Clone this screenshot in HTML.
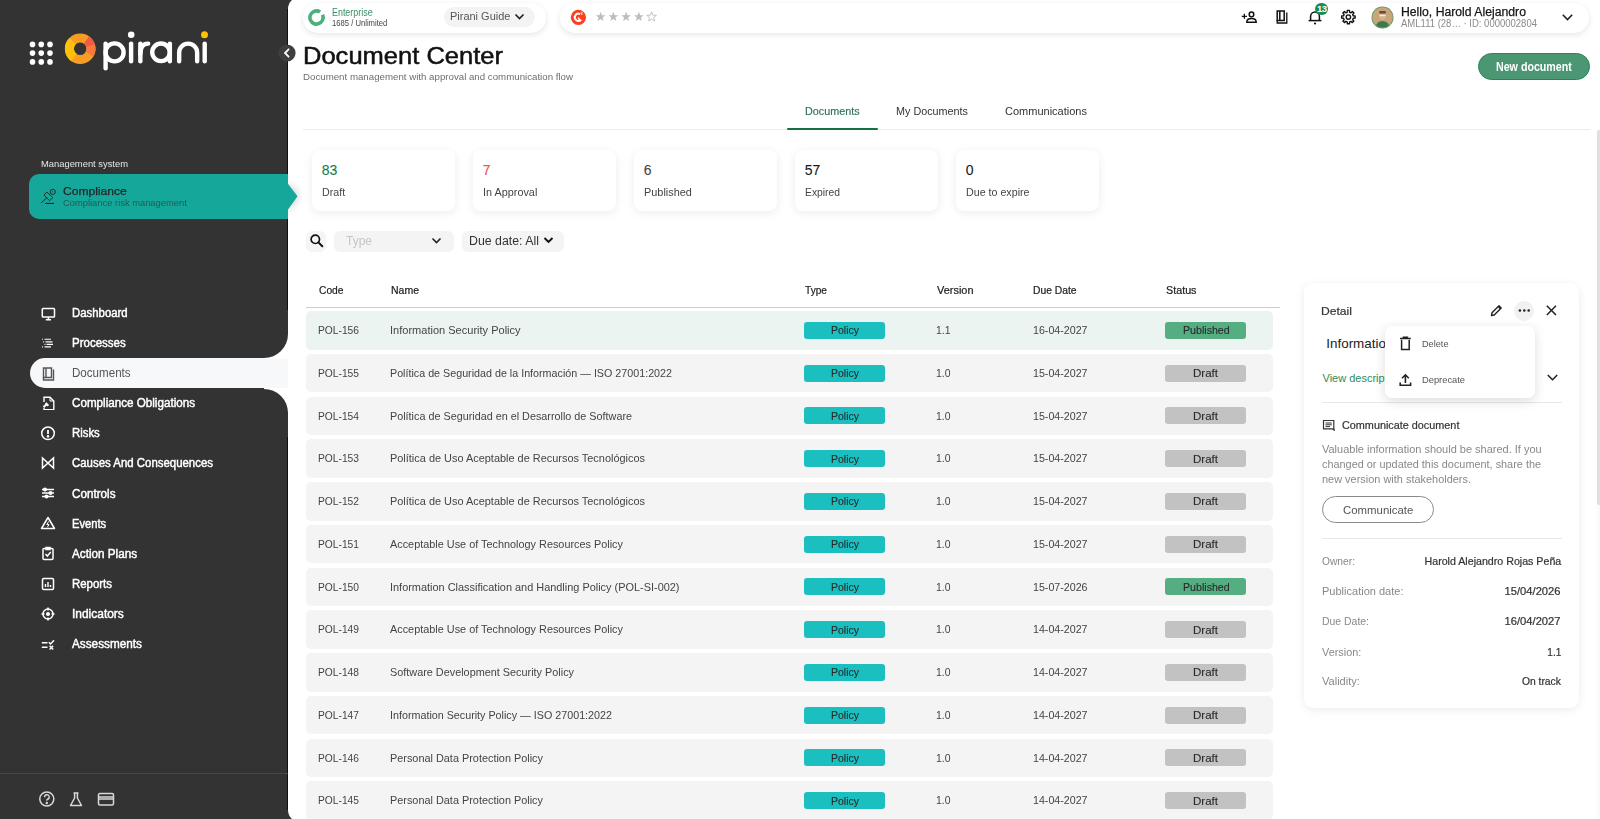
<!DOCTYPE html>
<html><head><meta charset="utf-8">
<style>
*{box-sizing:border-box;margin:0;padding:0}
html,body{width:1600px;height:819px;overflow:hidden}
body{background:#333333;font-family:"Liberation Sans",sans-serif;position:relative;color:#333}
.a{position:absolute;white-space:nowrap;line-height:1}
</style></head><body>
<div style="position:absolute;left:0;top:0;width:288px;height:819px;background:#333333"></div>
<svg class="a" style="left:0;top:0" width="288" height="100" viewBox="0 0 288 100"><circle cx="32.5" cy="44.4" r="2.8" fill="#fff"/><circle cx="32.5" cy="53.1" r="2.8" fill="#fff"/><circle cx="32.5" cy="61.9" r="2.8" fill="#fff"/><circle cx="41.25" cy="44.4" r="2.8" fill="#fff"/><circle cx="41.25" cy="53.1" r="2.8" fill="#fff"/><circle cx="41.25" cy="61.9" r="2.8" fill="#fff"/><circle cx="50" cy="44.4" r="2.8" fill="#fff"/><circle cx="50" cy="53.1" r="2.8" fill="#fff"/><circle cx="50" cy="61.9" r="2.8" fill="#fff"/><circle cx="80.2" cy="48.7" r="10.8" stroke="#f89c24" stroke-width="9" fill="none"/><path d="M72.56 41.06 A10.80 10.80 0 0 0 74.01 57.55" stroke="#ffc107" stroke-width="9.00" fill="none"/><path d="M90.63 45.90 A10.80 10.80 0 0 0 86.39 39.85" stroke="#f25a48" stroke-width="9.00" fill="none"/><path d="M89.55 54.10 A10.80 10.80 0 0 0 90.63 45.90" stroke="#f57a3e" stroke-width="9.00" fill="none"/><g stroke="#fff" stroke-width="4.4" fill="none" stroke-linecap="round"><line x1="105.6" y1="43.6" x2="105.6" y2="68.3"/><circle cx="114.6" cy="52.4" r="9.0"/><line x1="131.1" y1="43.6" x2="131.1" y2="61.2"/><line x1="140.35" y1="43.6" x2="140.35" y2="61.2"/><path d="M140.35 54 Q140.35 43.6 148.2 43.6"/><circle cx="161" cy="52.3" r="8.8"/><line x1="169.85" y1="43.6" x2="169.85" y2="61.2"/><path d="M179.15 61.2 V52.6 A9 9 0 0 1 197.15 52.6 V61.2"/><line x1="204.7" y1="43.6" x2="204.7" y2="61.2"/></g><circle cx="131.2" cy="34.7" r="3.3" fill="#fff"/><circle cx="204.5" cy="34.7" r="3.5" fill="#ffc107"/></svg>
<div class="a" style="left:287px;top:9px;width:1.2px;height:801px;background:#0f0f0f"></div>
<div id="t1" class="a" style="left:40.70px;top:160.21px;font-size:9.20px;color:#e6e6e6;font-weight:normal;transform:scaleX(1.0202);transform-origin:left center;">Management system</div>
<div class="a" style="left:29px;top:174px;width:260px;height:45px;background:#15a89a;border-radius:10px 0 0 10px"></div>
<svg class="a" style="left:40px;top:187px" width="18" height="18" viewBox="0 0 18 18"><g stroke="#262626" stroke-width="0.95" fill="none" stroke-linejoin="round"><path d="M3.9 8 L7 5.1 L12.8 10.6 L9.6 13.7 Z"/><path d="M6.6 10.9 L1.3 15.7" stroke-linecap="round"/><path d="M5.2 16.4 H14" stroke-width="1.1"/><circle cx="12.8" cy="4.9" r="2.6"/><path d="M12.7 3.9 V5.8" stroke-width="0.6"/></g></svg>
<div id="t2" class="a" style="left:63.40px;top:185.89px;font-size:11.00px;color:#262626;font-weight:normal;transform:scaleX(1.0982);transform-origin:left center;-webkit-text-stroke:0.25px #262626;">Compliance</div>
<div id="t3" class="a" style="left:63.40px;top:198.58px;font-size:9.00px;color:#1f5c55;font-weight:normal;transform:scaleX(1.0398);transform-origin:left center;">Compliance risk management</div>
<div class="a" style="left:29.5px;top:358.2px;width:270px;height:30.3px;background:#f7f8fa;border-radius:15px 0 0 15px"></div>
<div class="a" style="left:264px;top:334px;width:24px;height:24.5px;background:#ffffff"></div>
<div class="a" style="left:240px;top:310px;width:48px;height:48.2px;background:#333;border-radius:0 0 24px 0"></div>
<div class="a" style="left:264px;top:388.3px;width:24px;height:24px;background:#ffffff"></div>
<div class="a" style="left:240px;top:388.7px;width:48px;height:48px;background:#333;border-radius:0 24px 0 0"></div>
<svg class="a" style="left:40px;top:304.5px" width="16" height="16" viewBox="0 0 16 16"><g stroke="#ffffff" stroke-width="1.5" fill="none"><rect x="2.3" y="3.4" width="12.2" height="8.6" rx="0.8" /><path d="M8.4 12 V14.2 M5.8 14.8 H11"/></g></svg>
<div id="t4" class="a" style="left:72.40px;top:306.94px;font-size:12.00px;color:#ffffff;font-weight:normal;transform:scaleX(0.9486);transform-origin:left center;-webkit-text-stroke:0.45px #fff;">Dashboard</div>
<svg class="a" style="left:40px;top:334.3px" width="16" height="16" viewBox="0 0 16 16"><g stroke="#ffffff" stroke-width="1.5" fill="none"><path d="M2 5.2 H2.9 M4.5 5.2 H11 M3 7.9 H3.9 M5.5 7.9 H12.5 M4.5 10.4 H5.4 M6.5 10.4 H13 M2 12.8 H2.9 M4.5 12.8 H11" stroke-width="1.15"/></g></svg>
<div id="t5" class="a" style="left:72.40px;top:336.74px;font-size:12.00px;color:#ffffff;font-weight:normal;transform:scaleX(0.9584);transform-origin:left center;-webkit-text-stroke:0.45px #fff;">Processes</div>
<svg class="a" style="left:40px;top:364.6px" width="16" height="16" viewBox="0 0 16 16"><g stroke="#555555" stroke-width="1.5" fill="none"><path d="M3.5 3 H11.5 V12.5 H3.5 Z M6 3 V12.5" stroke-width="1.4"/><path d="M13.5 4.5 V15 H3.5 V12.5" stroke-width="1.4"/></g></svg>
<div id="t6" class="a" style="left:72.40px;top:367.04px;font-size:12.00px;color:#555555;font-weight:normal;transform:scaleX(0.9654);transform-origin:left center;">Documents</div>
<svg class="a" style="left:40px;top:394.4px" width="16" height="16" viewBox="0 0 16 16"><g stroke="#ffffff" stroke-width="1.5" fill="none"><path d="M4 8 V3.2 H10 L13.8 7 V15.8 H4 V14" stroke-width="1.4"/><path d="M10 3.2 V7 H13.8" stroke-width="1"/><path d="M3.5 13.2 L6.5 10.2 M5.6 9 L8.4 11.8" stroke-width="2"/></g></svg>
<div id="t7" class="a" style="left:72.40px;top:396.84px;font-size:12.00px;color:#ffffff;font-weight:normal;transform:scaleX(0.9705);transform-origin:left center;-webkit-text-stroke:0.45px #fff;">Compliance Obligations</div>
<svg class="a" style="left:40px;top:424.7px" width="16" height="16" viewBox="0 0 16 16"><g stroke="#ffffff" stroke-width="1.5" fill="none"><circle cx="8" cy="8.3" r="6.3"/><path d="M8 5 V9" stroke-width="1.8"/><circle cx="8" cy="11.3" r="0.6" fill="#ffffff"/></g></svg>
<div id="t8" class="a" style="left:72.40px;top:427.14px;font-size:12.00px;color:#ffffff;font-weight:normal;transform:scaleX(0.9474);transform-origin:left center;-webkit-text-stroke:0.45px #fff;">Risks</div>
<svg class="a" style="left:40px;top:455.0px" width="16" height="16" viewBox="0 0 16 16"><g stroke="#ffffff" stroke-width="1.5" fill="none"><path d="M2.5 3 L13.5 13 V3 L2.5 13 Z"/></g></svg>
<div id="t9" class="a" style="left:72.40px;top:457.44px;font-size:12.00px;color:#ffffff;font-weight:normal;transform:scaleX(0.9520);transform-origin:left center;-webkit-text-stroke:0.45px #fff;">Causes And Consequences</div>
<svg class="a" style="left:40px;top:485.3px" width="16" height="16" viewBox="0 0 16 16"><g stroke="#ffffff" stroke-width="1.5" fill="none"><path d="M2 4.5 H14 M2 8 H14 M2 11.5 H14"/><circle cx="5" cy="4.5" r="1.3" fill="#ffffff"/><circle cx="10.5" cy="8" r="1.3" fill="#ffffff"/><circle cx="6.5" cy="11.5" r="1.3" fill="#ffffff"/></g></svg>
<div id="t10" class="a" style="left:72.40px;top:487.74px;font-size:12.00px;color:#ffffff;font-weight:normal;transform:scaleX(0.9734);transform-origin:left center;-webkit-text-stroke:0.45px #fff;">Controls</div>
<svg class="a" style="left:40px;top:515.1px" width="16" height="16" viewBox="0 0 16 16"><g stroke="#ffffff" stroke-width="1.5" fill="none"><path d="M8 2.5 L14.5 13.5 H1.5 Z" stroke-linejoin="round"/><path d="M8.6 6.5 L6.8 9.6 H9 L7.4 12.2" stroke-width="1"/></g></svg>
<div id="t11" class="a" style="left:72.40px;top:517.54px;font-size:12.00px;color:#ffffff;font-weight:normal;transform:scaleX(0.9322);transform-origin:left center;-webkit-text-stroke:0.45px #fff;">Events</div>
<svg class="a" style="left:40px;top:545.4px" width="16" height="16" viewBox="0 0 16 16"><g stroke="#ffffff" stroke-width="1.5" fill="none"><rect x="3" y="3.5" width="10" height="11" rx="1"/><path d="M6 2.5 H10 V4.5 H6 Z" fill="#ffffff"/><path d="M5.5 9 L7.3 11 L10.8 7"/></g></svg>
<div id="t12" class="a" style="left:72.40px;top:547.84px;font-size:12.00px;color:#ffffff;font-weight:normal;transform:scaleX(0.9745);transform-origin:left center;-webkit-text-stroke:0.45px #fff;">Action Plans</div>
<svg class="a" style="left:40px;top:575.7px" width="16" height="16" viewBox="0 0 16 16"><g stroke="#ffffff" stroke-width="1.5" fill="none"><rect x="2.5" y="2.5" width="11" height="11" rx="1.2"/><path d="M5.5 11 V8 M8 11 V6 M10.5 11 V9" stroke-width="1.4"/></g></svg>
<div id="t13" class="a" style="left:72.40px;top:578.14px;font-size:12.00px;color:#ffffff;font-weight:normal;transform:scaleX(0.9517);transform-origin:left center;-webkit-text-stroke:0.45px #fff;">Reports</div>
<svg class="a" style="left:40px;top:605.5px" width="16" height="16" viewBox="0 0 16 16"><g stroke="#ffffff" stroke-width="1.5" fill="none"><circle cx="8" cy="8" r="5"/><path d="M8 1.5 V4.5 M8 11.5 V14.5 M1.5 8 H4.5 M11.5 8 H14.5"/><circle cx="8" cy="8" r="1.3" fill="#ffffff"/></g></svg>
<div id="t14" class="a" style="left:72.40px;top:607.94px;font-size:12.00px;color:#ffffff;font-weight:normal;transform:scaleX(0.9956);transform-origin:left center;-webkit-text-stroke:0.45px #fff;">Indicators</div>
<svg class="a" style="left:40px;top:635.8px" width="16" height="16" viewBox="0 0 16 16"><g stroke="#ffffff" stroke-width="1.5" fill="none"><path d="M1.8 6.8 H7.5 M1.8 11.2 H7.5" stroke-width="1.4"/><path d="M8.8 6.2 L10.6 8 L14 4.2 M9.6 9.8 L13.2 13.4 M13.2 9.8 L9.6 13.4" stroke-width="1.4"/></g></svg>
<div id="t15" class="a" style="left:72.40px;top:638.24px;font-size:12.00px;color:#ffffff;font-weight:normal;transform:scaleX(0.9795);transform-origin:left center;-webkit-text-stroke:0.45px #fff;">Assessments</div>
<div class="a" style="left:0;top:772.5px;width:288px;height:1px;background:#474747"></div>
<svg class="a" style="left:38px;top:791px" width="80" height="17" viewBox="0 0 80 17"><g stroke="#d8d8d8" stroke-width="1.5" fill="none"><circle cx="8.8" cy="8" r="7"/><path d="M6.6 6.2 A2.3 2.3 0 1 1 9.2 8.3 Q8.8 8.6 8.8 9.8" stroke-width="1.4"/><circle cx="8.8" cy="12.1" r="0.5" fill="#d8d8d8"/><path d="M35.5 2 H40.5 M36.6 2 V7 L32.5 14.5 H43.5 L39.4 7 V2" stroke-linejoin="round"/><rect x="60.5" y="2.5" width="15" height="11.5" rx="1.5"/><path d="M60.5 6 H75.5 M60.5 8 H75.5" stroke-width="1.6"/></g></svg>
<div class="a" style="left:288px;top:-3px;width:1312px;height:825px;background:#ffffff;border-radius:12px 0 0 12px"></div>
<div class="a" style="left:288px;top:160px;width:40px;height:75px;overflow:hidden"><svg style="position:absolute;left:-1px;top:22px;filter:drop-shadow(0 0 4px rgba(0,0,0,0.28))" width="13" height="30" viewBox="0 0 13 30"><path d="M0 0.5 L10.5 14.3 L0 29 Z" fill="#15a89a"/></svg></div>
<svg class="a" style="left:277px;top:43px" width="20" height="20" viewBox="0 0 20 20"><circle cx="10" cy="10" r="8.6" fill="#3f3f3f"/><path d="M11.6 6.3 L8 10 L11.6 13.7" stroke="#fff" stroke-width="1.8" fill="none" stroke-linecap="round"/></svg>
<div class="a" style="left:303px;top:2.5px;width:243px;height:30px;background:#fff;border-radius:15px;box-shadow:0 2px 6px rgba(0,0,0,0.10)"></div>
<svg class="a" style="left:307px;top:8px" width="19" height="19" viewBox="0 0 19 19"><circle cx="9.5" cy="9.5" r="6.6" stroke="#4caf7d" stroke-width="3.6" fill="none" stroke-dasharray="37.5 4" transform="rotate(-25 9.5 9.5)"/></svg>
<div id="t16" class="a" style="left:331.60px;top:7.84px;font-size:10.00px;color:#3d8c6a;font-weight:normal;transform:scaleX(0.8908);transform-origin:left center;">Enterprise</div>
<div id="t17" class="a" style="left:331.60px;top:18.55px;font-size:8.80px;color:#444;font-weight:normal;transform:scaleX(0.8698);transform-origin:left center;">1685 / Unlimited</div>
<div class="a" style="left:443.8px;top:7.3px;width:91px;height:19.5px;background:#f3f3f3;border-radius:10px"></div>
<div id="t18" class="a" style="left:450.00px;top:10.91px;font-size:10.50px;color:#555;font-weight:normal;transform:scaleX(1.0453);transform-origin:left center;">Pirani Guide</div>
<svg class="a" style="left:514px;top:13px" width="11" height="8" viewBox="0 0 11 8"><path d="M1.5 1.5 L5.5 5.5 L9.5 1.5" stroke="#222" stroke-width="1.7" fill="none"/></svg>
<div class="a" style="left:560px;top:2.5px;width:1029px;height:30px;background:#fff;border-radius:15px;box-shadow:0 2px 6px rgba(0,0,0,0.10)"></div>
<svg class="a" style="left:570px;top:9px" width="17" height="17" viewBox="0 0 17 17"><circle cx="8.4" cy="8.3" r="7.6" fill="#ff3d1f"/><path d="M10.2 5.2 A3.6 3.6 0 1 0 11.2 10.6" stroke="#fff" stroke-width="1.9" fill="none"/><path d="M8.2 8.6 L9.8 11.2" stroke="#fff" stroke-width="1.6"/><path d="M10.8 3.4 Q12 2.6 12.4 3.6 Q12.4 4.3 10.9 5.2 H12.8" stroke="#fff" stroke-width="0.7" fill="none"/></svg>
<svg class="a" style="left:592px;top:8px" width="70" height="18" viewBox="0 0 70 18"><polygon points="8.60,3.85 7.35,7.18 3.80,7.34 6.58,9.56 5.63,12.99 8.60,11.02 11.57,12.99 10.62,9.56 13.40,7.34 9.85,7.18" fill="#bdbdbd"/><polygon points="21.35,3.85 20.10,7.18 16.55,7.34 19.33,9.56 18.38,12.99 21.35,11.02 24.32,12.99 23.37,9.56 26.15,7.34 22.60,7.18" fill="#bdbdbd"/><polygon points="34.10,3.85 32.85,7.18 29.30,7.34 32.08,9.56 31.13,12.99 34.10,11.02 37.07,12.99 36.12,9.56 38.90,7.34 35.35,7.18" fill="#bdbdbd"/><polygon points="46.85,3.85 45.60,7.18 42.05,7.34 44.83,9.56 43.88,12.99 46.85,11.02 49.82,12.99 48.87,9.56 51.65,7.34 48.10,7.18" fill="#bdbdbd"/><polygon points="59.60,3.85 58.35,7.18 54.80,7.34 57.58,9.56 56.63,12.99 59.60,11.02 62.57,12.99 61.62,9.56 64.40,7.34 60.85,7.18" fill="none" stroke="#bdbdbd" stroke-width="0.9"/></svg>
<svg class="a" style="left:1238px;top:6px" width="125" height="24" viewBox="0 0 125 24"><g stroke="#111" stroke-width="1.5" fill="none"><path d="M3.8 10.3 H8.9 M6.35 7.8 V12.8" stroke-width="1.3"/><circle cx="13.5" cy="8.4" r="2.3"/><path d="M8.8 16.2 Q8.8 12.6 13.5 12.6 Q18.2 12.6 18.2 16.2 Z"/><path d="M39.2 5 H46.2 V14.5 H39.2 Z"/><path d="M41.8 5 V14.5"/><path d="M39.2 14.5 V17 H48.8 V6.5" stroke-width="1.3"/><path d="M72.6 14.6 V10.3 A4.4 4.4 0 0 1 81.4 10.3 V14.6"/><path d="M70.6 14.6 H83.4"/><circle cx="77" cy="17.5" r="1.1" fill="#111" stroke="none"/></g></svg>
<svg class="a" style="left:1340px;top:9px" width="17" height="17" viewBox="0 0 17 17"><g fill="none" stroke="#111" stroke-width="1.4" stroke-linejoin="round"><polygon points="13.25,6.89 15.12,7.04 15.12,9.16 13.25,9.31 12.69,10.68 13.90,12.10 12.40,13.60 10.98,12.39 9.61,12.95 9.46,14.82 7.34,14.82 7.19,12.95 5.82,12.39 4.40,13.60 2.90,12.10 4.11,10.68 3.55,9.31 1.68,9.16 1.68,7.04 3.55,6.89 4.11,5.52 2.90,4.10 4.40,2.60 5.82,3.81 7.19,3.25 7.34,1.38 9.46,1.38 9.61,3.25 10.98,3.81 12.40,2.60 13.90,4.10 12.69,5.52"/><circle cx="8.4" cy="8.1" r="2.2"/></g></svg>
<div class="a" style="left:1315.3px;top:2.7px;width:12.8px;height:12.8px;border-radius:7px;background:#1e8a55;color:#fff;font-size:9.5px;font-weight:bold;line-height:12.8px;text-align:center;letter-spacing:-0.6px">13</div>
<svg class="a" style="left:1371px;top:6px" width="23" height="23" viewBox="0 0 23 23"><defs><clipPath id="av"><circle cx="11.5" cy="11.5" r="10.2"/></clipPath></defs><circle cx="11.5" cy="11.5" r="11" fill="#5a9a6e"/><g clip-path="url(#av)"><rect width="23" height="23" fill="#c9a679"/><path d="M4 23 Q5 15 11.5 15 Q18 15 19 23 Z" fill="#3f7a4f"/><ellipse cx="11.5" cy="9.5" rx="3.3" ry="4.2" fill="#d8b18e"/><rect x="8.3" y="5" width="6.4" height="2.6" fill="#6b4b3a"/><rect x="8.5" y="8.8" width="6" height="1.4" fill="#eee"/></g></svg>
<div id="t19" class="a" style="left:1400.80px;top:5.54px;font-size:12.00px;color:#161616;font-weight:normal;transform:scaleX(1.0183);transform-origin:left center;-webkit-text-stroke:0.25px #161616;">Hello, Harold Alejandro</div>
<div id="t20" class="a" style="left:1400.80px;top:18.54px;font-size:10.00px;color:#8a8a8a;font-weight:normal;transform:scaleX(0.9506);transform-origin:left center;">AML111 (28… · ID: 0000002804</div>
<svg class="a" style="left:1561px;top:13px" width="13" height="9" viewBox="0 0 13 9"><path d="M1.8 1.8 L6.5 6.5 L11.2 1.8" stroke="#222" stroke-width="1.6" fill="none"/></svg>
<div id="t21" class="a" style="left:303.40px;top:44.48px;font-size:24.00px;color:#111;font-weight:normal;transform:scaleX(1.0633);transform-origin:left center;-webkit-text-stroke:0.5px #111;">Document Center</div>
<div id="t22" class="a" style="left:303.00px;top:72.58px;font-size:9.00px;color:#6e6e6e;font-weight:normal;transform:scaleX(1.0772);transform-origin:left center;">Document management with approval and communication flow</div>
<div class="a" style="left:1478px;top:53px;width:111.5px;height:27px;border-radius:14px;background:#4b9673;border:1px solid #25855a"></div>
<div id="t23" class="a" style="left:1496.00px;top:61.04px;font-size:12.00px;color:#fff;font-weight:bold;transform:scaleX(0.8882);transform-origin:left center;">New document</div>
<div id="t24" class="a" style="left:805.00px;top:105.63px;font-size:10.60px;color:#2b715b;font-weight:normal;transform:scaleX(1.0188);transform-origin:left center;-webkit-text-stroke:0.15px #2b715b;">Documents</div>
<div id="t25" class="a" style="left:896.40px;top:105.63px;font-size:10.60px;color:#333;font-weight:normal;transform:scaleX(1.0190);transform-origin:left center;">My Documents</div>
<div id="t26" class="a" style="left:1005.40px;top:105.63px;font-size:10.60px;color:#333;font-weight:normal;transform:scaleX(1.0392);transform-origin:left center;">Communications</div>
<div class="a" style="left:303px;top:128.5px;width:1287px;height:1px;background:#ececec"></div>
<div class="a" style="left:787px;top:127.8px;width:90.5px;height:2.2px;background:#16703f;border-radius:1px"></div>
<div class="a" style="left:312px;top:150px;width:143px;height:61px;background:#fff;border-radius:8px;box-shadow:0 2px 10px rgba(0,0,0,0.08)"></div>
<div id="t27" class="a" style="left:321.80px;top:163.05px;font-size:14.00px;color:#1b7a4a;font-weight:normal;transform-origin:left center;-webkit-text-stroke:0.1px #1b7a4a;">83</div>
<div id="t28" class="a" style="left:321.80px;top:187.31px;font-size:10.50px;color:#444;font-weight:normal;transform:scaleX(1.0147);transform-origin:left center;">Draft</div>
<div class="a" style="left:473px;top:150px;width:143px;height:61px;background:#fff;border-radius:8px;box-shadow:0 2px 10px rgba(0,0,0,0.08)"></div>
<div id="t29" class="a" style="left:482.80px;top:163.05px;font-size:14.00px;color:#ef5350;font-weight:normal;transform-origin:left center;-webkit-text-stroke:0.1px #ef5350;">7</div>
<div id="t30" class="a" style="left:482.80px;top:187.31px;font-size:10.50px;color:#444;font-weight:normal;transform:scaleX(1.0334);transform-origin:left center;">In Approval</div>
<div class="a" style="left:634px;top:150px;width:143px;height:61px;background:#fff;border-radius:8px;box-shadow:0 2px 10px rgba(0,0,0,0.08)"></div>
<div id="t31" class="a" style="left:643.80px;top:163.05px;font-size:14.00px;color:#444;font-weight:normal;transform-origin:left center;-webkit-text-stroke:0.1px #444;">6</div>
<div id="t32" class="a" style="left:643.80px;top:187.31px;font-size:10.50px;color:#444;font-weight:normal;transform:scaleX(1.0385);transform-origin:left center;">Published</div>
<div class="a" style="left:795px;top:150px;width:143px;height:61px;background:#fff;border-radius:8px;box-shadow:0 2px 10px rgba(0,0,0,0.08)"></div>
<div id="t33" class="a" style="left:804.80px;top:163.05px;font-size:14.00px;color:#1a1a1a;font-weight:normal;transform-origin:left center;-webkit-text-stroke:0.1px #1a1a1a;">57</div>
<div id="t34" class="a" style="left:804.80px;top:187.31px;font-size:10.50px;color:#444;font-weight:normal;transform:scaleX(0.9829);transform-origin:left center;">Expired</div>
<div class="a" style="left:956px;top:150px;width:143px;height:61px;background:#fff;border-radius:8px;box-shadow:0 2px 10px rgba(0,0,0,0.08)"></div>
<div id="t35" class="a" style="left:965.80px;top:163.05px;font-size:14.00px;color:#1a1a1a;font-weight:normal;transform-origin:left center;-webkit-text-stroke:0.1px #1a1a1a;">0</div>
<div id="t36" class="a" style="left:965.80px;top:187.31px;font-size:10.50px;color:#444;font-weight:normal;transform:scaleX(1.0168);transform-origin:left center;">Due to expire</div>
<div class="a" style="left:306px;top:231px;width:20px;height:20.5px;background:#f5f5f5;border-radius:6px"></div>
<svg class="a" style="left:309px;top:233px" width="16" height="16" viewBox="0 0 16 16"><circle cx="6.3" cy="6.3" r="4.2" stroke="#111" stroke-width="1.7" fill="none"/><path d="M9.4 9.4 L13.3 13.3" stroke="#111" stroke-width="2" stroke-linecap="round"/></svg>
<div class="a" style="left:334px;top:231px;width:120px;height:20.5px;background:#f4f4f4;border-radius:6px"></div>
<div id="t37" class="a" style="left:345.90px;top:235.04px;font-size:12.00px;color:#c6c6c6;font-weight:normal;transform:scaleX(0.9994);transform-origin:left center;">Type</div>
<svg class="a" style="left:431px;top:236px" width="11" height="9" viewBox="0 0 11 9"><path d="M1.5 2.5 L5.5 6.5 L9.5 2.5" stroke="#222" stroke-width="1.6" fill="none"/></svg>
<div class="a" style="left:461.5px;top:231px;width:102px;height:20.5px;background:#f4f4f4;border-radius:6px"></div>
<div id="t38" class="a" style="left:468.50px;top:235.04px;font-size:12.00px;color:#333;font-weight:normal;transform:scaleX(1.0287);transform-origin:left center;">Due date: All</div>
<svg class="a" style="left:543px;top:236px" width="11" height="9" viewBox="0 0 11 9"><path d="M1.5 2 L5.5 6 L9.5 2" stroke="#111" stroke-width="1.9" fill="none"/></svg>
<div id="t39" class="a" style="left:318.50px;top:285.54px;font-size:10.00px;color:#222;font-weight:normal;transform:scaleX(1.0248);transform-origin:left center;-webkit-text-stroke:0.2px #222;">Code</div>
<div id="t40" class="a" style="left:390.60px;top:285.54px;font-size:10.00px;color:#222;font-weight:normal;transform:scaleX(1.0492);transform-origin:left center;-webkit-text-stroke:0.2px #222;">Name</div>
<div id="t41" class="a" style="left:805.00px;top:285.54px;font-size:10.00px;color:#222;font-weight:normal;transform:scaleX(1.0144);transform-origin:left center;-webkit-text-stroke:0.2px #222;">Type</div>
<div id="t42" class="a" style="left:936.80px;top:285.54px;font-size:10.00px;color:#222;font-weight:normal;transform:scaleX(1.0941);transform-origin:left center;-webkit-text-stroke:0.2px #222;">Version</div>
<div id="t43" class="a" style="left:1033.40px;top:285.54px;font-size:10.00px;color:#222;font-weight:normal;transform:scaleX(1.0296);transform-origin:left center;-webkit-text-stroke:0.2px #222;">Due Date</div>
<div id="t44" class="a" style="left:1166.00px;top:285.54px;font-size:10.00px;color:#222;font-weight:normal;transform:scaleX(1.0755);transform-origin:left center;-webkit-text-stroke:0.2px #222;">Status</div>
<div class="a" style="left:306px;top:306.8px;width:974px;height:1.2px;background:#b8d9c6"></div>
<div class="a" style="left:306px;top:311.00px;width:967px;height:38.6px;background:#ebf4f1;border-radius:5px"></div>
<div id="t45" class="a" style="left:317.90px;top:326.18px;font-size:10.30px;color:#444;font-weight:normal;transform:scaleX(0.9947);transform-origin:left center;">POL-156</div>
<div id="t46" class="a" style="left:389.90px;top:326.18px;font-size:10.30px;color:#444;font-weight:normal;transform:scaleX(1.0713);transform-origin:left center;">Information Security Policy</div>
<div class="a" style="left:804px;top:321.80px;width:81px;height:17px;background:#1bbfc0;border-radius:3px"></div>
<div id="t47" class="a" style="left:830.50px;top:326.44px;font-size:10.00px;color:#2a2a2a;font-weight:normal;transform:scaleX(1.0492);transform-origin:left center;-webkit-text-stroke:0.1px #2a2a2a;">Policy</div>
<div id="t48" class="a" style="left:936.20px;top:326.18px;font-size:10.30px;color:#444;font-weight:normal;transform:scaleX(1.0120);transform-origin:left center;">1.1</div>
<div id="t49" class="a" style="left:1032.80px;top:326.18px;font-size:10.30px;color:#444;font-weight:normal;transform:scaleX(1.0347);transform-origin:left center;">16-04-2027</div>
<div class="a" style="left:1165.2px;top:321.80px;width:81px;height:17px;background:#55ad82;border-radius:3px"></div>
<div id="t50" class="a" style="left:1182.50px;top:326.44px;font-size:10.00px;color:#2a2a2a;font-weight:normal;transform:scaleX(1.0633);transform-origin:left center;-webkit-text-stroke:0.1px #2a2a2a;">Published</div>
<div class="a" style="left:306px;top:353.75px;width:967px;height:38.6px;background:#f4f4f4;border-radius:5px"></div>
<div id="t51" class="a" style="left:317.90px;top:368.93px;font-size:10.30px;color:#444;font-weight:normal;transform:scaleX(0.9947);transform-origin:left center;">POL-155</div>
<div id="t52" class="a" style="left:389.90px;top:368.93px;font-size:10.30px;color:#444;font-weight:normal;transform:scaleX(1.0415);transform-origin:left center;">Política de Seguridad de la Información — ISO 27001:2022</div>
<div class="a" style="left:804px;top:364.55px;width:81px;height:17px;background:#1bbfc0;border-radius:3px"></div>
<div id="t53" class="a" style="left:830.50px;top:369.19px;font-size:10.00px;color:#2a2a2a;font-weight:normal;transform:scaleX(1.0492);transform-origin:left center;-webkit-text-stroke:0.1px #2a2a2a;">Policy</div>
<div id="t54" class="a" style="left:936.20px;top:368.93px;font-size:10.30px;color:#444;font-weight:normal;transform:scaleX(1.0120);transform-origin:left center;">1.0</div>
<div id="t55" class="a" style="left:1032.80px;top:368.93px;font-size:10.30px;color:#444;font-weight:normal;transform:scaleX(1.0347);transform-origin:left center;">15-04-2027</div>
<div class="a" style="left:1165.2px;top:364.55px;width:81px;height:17px;background:#c2c2c2;border-radius:3px"></div>
<div id="t56" class="a" style="left:1193.00px;top:369.19px;font-size:10.00px;color:#2a2a2a;font-weight:normal;transform:scaleX(1.1536);transform-origin:left center;-webkit-text-stroke:0.1px #2a2a2a;">Draft</div>
<div class="a" style="left:306px;top:396.50px;width:967px;height:38.6px;background:#f4f4f4;border-radius:5px"></div>
<div id="t57" class="a" style="left:317.90px;top:411.68px;font-size:10.30px;color:#444;font-weight:normal;transform:scaleX(0.9947);transform-origin:left center;">POL-154</div>
<div id="t58" class="a" style="left:389.90px;top:411.68px;font-size:10.30px;color:#444;font-weight:normal;transform:scaleX(1.0491);transform-origin:left center;">Política de Seguridad en el Desarrollo de Software</div>
<div class="a" style="left:804px;top:407.30px;width:81px;height:17px;background:#1bbfc0;border-radius:3px"></div>
<div id="t59" class="a" style="left:830.50px;top:411.94px;font-size:10.00px;color:#2a2a2a;font-weight:normal;transform:scaleX(1.0492);transform-origin:left center;-webkit-text-stroke:0.1px #2a2a2a;">Policy</div>
<div id="t60" class="a" style="left:936.20px;top:411.68px;font-size:10.30px;color:#444;font-weight:normal;transform:scaleX(1.0120);transform-origin:left center;">1.0</div>
<div id="t61" class="a" style="left:1032.80px;top:411.68px;font-size:10.30px;color:#444;font-weight:normal;transform:scaleX(1.0347);transform-origin:left center;">15-04-2027</div>
<div class="a" style="left:1165.2px;top:407.30px;width:81px;height:17px;background:#c2c2c2;border-radius:3px"></div>
<div id="t62" class="a" style="left:1193.00px;top:411.94px;font-size:10.00px;color:#2a2a2a;font-weight:normal;transform:scaleX(1.1536);transform-origin:left center;-webkit-text-stroke:0.1px #2a2a2a;">Draft</div>
<div class="a" style="left:306px;top:439.25px;width:967px;height:38.6px;background:#f4f4f4;border-radius:5px"></div>
<div id="t63" class="a" style="left:317.90px;top:454.43px;font-size:10.30px;color:#444;font-weight:normal;transform:scaleX(0.9947);transform-origin:left center;">POL-153</div>
<div id="t64" class="a" style="left:389.90px;top:454.43px;font-size:10.30px;color:#444;font-weight:normal;transform:scaleX(1.0615);transform-origin:left center;">Política de Uso Aceptable de Recursos Tecnológicos</div>
<div class="a" style="left:804px;top:450.05px;width:81px;height:17px;background:#1bbfc0;border-radius:3px"></div>
<div id="t65" class="a" style="left:830.50px;top:454.69px;font-size:10.00px;color:#2a2a2a;font-weight:normal;transform:scaleX(1.0492);transform-origin:left center;-webkit-text-stroke:0.1px #2a2a2a;">Policy</div>
<div id="t66" class="a" style="left:936.20px;top:454.43px;font-size:10.30px;color:#444;font-weight:normal;transform:scaleX(1.0120);transform-origin:left center;">1.0</div>
<div id="t67" class="a" style="left:1032.80px;top:454.43px;font-size:10.30px;color:#444;font-weight:normal;transform:scaleX(1.0347);transform-origin:left center;">15-04-2027</div>
<div class="a" style="left:1165.2px;top:450.05px;width:81px;height:17px;background:#c2c2c2;border-radius:3px"></div>
<div id="t68" class="a" style="left:1193.00px;top:454.69px;font-size:10.00px;color:#2a2a2a;font-weight:normal;transform:scaleX(1.1536);transform-origin:left center;-webkit-text-stroke:0.1px #2a2a2a;">Draft</div>
<div class="a" style="left:306px;top:482.00px;width:967px;height:38.6px;background:#f4f4f4;border-radius:5px"></div>
<div id="t69" class="a" style="left:317.90px;top:497.18px;font-size:10.30px;color:#444;font-weight:normal;transform:scaleX(0.9947);transform-origin:left center;">POL-152</div>
<div id="t70" class="a" style="left:389.90px;top:497.18px;font-size:10.30px;color:#444;font-weight:normal;transform:scaleX(1.0615);transform-origin:left center;">Política de Uso Aceptable de Recursos Tecnológicos</div>
<div class="a" style="left:804px;top:492.80px;width:81px;height:17px;background:#1bbfc0;border-radius:3px"></div>
<div id="t71" class="a" style="left:830.50px;top:497.44px;font-size:10.00px;color:#2a2a2a;font-weight:normal;transform:scaleX(1.0492);transform-origin:left center;-webkit-text-stroke:0.1px #2a2a2a;">Policy</div>
<div id="t72" class="a" style="left:936.20px;top:497.18px;font-size:10.30px;color:#444;font-weight:normal;transform:scaleX(1.0120);transform-origin:left center;">1.0</div>
<div id="t73" class="a" style="left:1032.80px;top:497.18px;font-size:10.30px;color:#444;font-weight:normal;transform:scaleX(1.0347);transform-origin:left center;">15-04-2027</div>
<div class="a" style="left:1165.2px;top:492.80px;width:81px;height:17px;background:#c2c2c2;border-radius:3px"></div>
<div id="t74" class="a" style="left:1193.00px;top:497.44px;font-size:10.00px;color:#2a2a2a;font-weight:normal;transform:scaleX(1.1536);transform-origin:left center;-webkit-text-stroke:0.1px #2a2a2a;">Draft</div>
<div class="a" style="left:306px;top:524.75px;width:967px;height:38.6px;background:#f4f4f4;border-radius:5px"></div>
<div id="t75" class="a" style="left:317.90px;top:539.93px;font-size:10.30px;color:#444;font-weight:normal;transform:scaleX(0.9947);transform-origin:left center;">POL-151</div>
<div id="t76" class="a" style="left:389.90px;top:539.93px;font-size:10.30px;color:#444;font-weight:normal;transform:scaleX(1.0555);transform-origin:left center;">Acceptable Use of Technology Resources Policy</div>
<div class="a" style="left:804px;top:535.55px;width:81px;height:17px;background:#1bbfc0;border-radius:3px"></div>
<div id="t77" class="a" style="left:830.50px;top:540.18px;font-size:10.00px;color:#2a2a2a;font-weight:normal;transform:scaleX(1.0492);transform-origin:left center;-webkit-text-stroke:0.1px #2a2a2a;">Policy</div>
<div id="t78" class="a" style="left:936.20px;top:539.93px;font-size:10.30px;color:#444;font-weight:normal;transform:scaleX(1.0120);transform-origin:left center;">1.0</div>
<div id="t79" class="a" style="left:1032.80px;top:539.93px;font-size:10.30px;color:#444;font-weight:normal;transform:scaleX(1.0347);transform-origin:left center;">15-04-2027</div>
<div class="a" style="left:1165.2px;top:535.55px;width:81px;height:17px;background:#c2c2c2;border-radius:3px"></div>
<div id="t80" class="a" style="left:1193.00px;top:540.18px;font-size:10.00px;color:#2a2a2a;font-weight:normal;transform:scaleX(1.1536);transform-origin:left center;-webkit-text-stroke:0.1px #2a2a2a;">Draft</div>
<div class="a" style="left:306px;top:567.50px;width:967px;height:38.6px;background:#f4f4f4;border-radius:5px"></div>
<div id="t81" class="a" style="left:317.90px;top:582.68px;font-size:10.30px;color:#444;font-weight:normal;transform:scaleX(0.9947);transform-origin:left center;">POL-150</div>
<div id="t82" class="a" style="left:389.90px;top:582.68px;font-size:10.30px;color:#444;font-weight:normal;transform:scaleX(1.0604);transform-origin:left center;">Information Classification and Handling Policy (POL-SI-002)</div>
<div class="a" style="left:804px;top:578.30px;width:81px;height:17px;background:#1bbfc0;border-radius:3px"></div>
<div id="t83" class="a" style="left:830.50px;top:582.93px;font-size:10.00px;color:#2a2a2a;font-weight:normal;transform:scaleX(1.0492);transform-origin:left center;-webkit-text-stroke:0.1px #2a2a2a;">Policy</div>
<div id="t84" class="a" style="left:936.20px;top:582.68px;font-size:10.30px;color:#444;font-weight:normal;transform:scaleX(1.0120);transform-origin:left center;">1.0</div>
<div id="t85" class="a" style="left:1032.80px;top:582.68px;font-size:10.30px;color:#444;font-weight:normal;transform:scaleX(1.0347);transform-origin:left center;">15-07-2026</div>
<div class="a" style="left:1165.2px;top:578.30px;width:81px;height:17px;background:#55ad82;border-radius:3px"></div>
<div id="t86" class="a" style="left:1182.50px;top:582.93px;font-size:10.00px;color:#2a2a2a;font-weight:normal;transform:scaleX(1.0633);transform-origin:left center;-webkit-text-stroke:0.1px #2a2a2a;">Published</div>
<div class="a" style="left:306px;top:610.25px;width:967px;height:38.6px;background:#f4f4f4;border-radius:5px"></div>
<div id="t87" class="a" style="left:317.90px;top:625.43px;font-size:10.30px;color:#444;font-weight:normal;transform:scaleX(0.9947);transform-origin:left center;">POL-149</div>
<div id="t88" class="a" style="left:389.90px;top:625.43px;font-size:10.30px;color:#444;font-weight:normal;transform:scaleX(1.0555);transform-origin:left center;">Acceptable Use of Technology Resources Policy</div>
<div class="a" style="left:804px;top:621.05px;width:81px;height:17px;background:#1bbfc0;border-radius:3px"></div>
<div id="t89" class="a" style="left:830.50px;top:625.68px;font-size:10.00px;color:#2a2a2a;font-weight:normal;transform:scaleX(1.0492);transform-origin:left center;-webkit-text-stroke:0.1px #2a2a2a;">Policy</div>
<div id="t90" class="a" style="left:936.20px;top:625.43px;font-size:10.30px;color:#444;font-weight:normal;transform:scaleX(1.0120);transform-origin:left center;">1.0</div>
<div id="t91" class="a" style="left:1032.80px;top:625.43px;font-size:10.30px;color:#444;font-weight:normal;transform:scaleX(1.0347);transform-origin:left center;">14-04-2027</div>
<div class="a" style="left:1165.2px;top:621.05px;width:81px;height:17px;background:#c2c2c2;border-radius:3px"></div>
<div id="t92" class="a" style="left:1193.00px;top:625.68px;font-size:10.00px;color:#2a2a2a;font-weight:normal;transform:scaleX(1.1536);transform-origin:left center;-webkit-text-stroke:0.1px #2a2a2a;">Draft</div>
<div class="a" style="left:306px;top:653.00px;width:967px;height:38.6px;background:#f4f4f4;border-radius:5px"></div>
<div id="t93" class="a" style="left:317.90px;top:668.18px;font-size:10.30px;color:#444;font-weight:normal;transform:scaleX(0.9947);transform-origin:left center;">POL-148</div>
<div id="t94" class="a" style="left:389.90px;top:668.18px;font-size:10.30px;color:#444;font-weight:normal;transform:scaleX(1.0541);transform-origin:left center;">Software Development Security Policy</div>
<div class="a" style="left:804px;top:663.80px;width:81px;height:17px;background:#1bbfc0;border-radius:3px"></div>
<div id="t95" class="a" style="left:830.50px;top:668.43px;font-size:10.00px;color:#2a2a2a;font-weight:normal;transform:scaleX(1.0492);transform-origin:left center;-webkit-text-stroke:0.1px #2a2a2a;">Policy</div>
<div id="t96" class="a" style="left:936.20px;top:668.18px;font-size:10.30px;color:#444;font-weight:normal;transform:scaleX(1.0120);transform-origin:left center;">1.0</div>
<div id="t97" class="a" style="left:1032.80px;top:668.18px;font-size:10.30px;color:#444;font-weight:normal;transform:scaleX(1.0347);transform-origin:left center;">14-04-2027</div>
<div class="a" style="left:1165.2px;top:663.80px;width:81px;height:17px;background:#c2c2c2;border-radius:3px"></div>
<div id="t98" class="a" style="left:1193.00px;top:668.43px;font-size:10.00px;color:#2a2a2a;font-weight:normal;transform:scaleX(1.1536);transform-origin:left center;-webkit-text-stroke:0.1px #2a2a2a;">Draft</div>
<div class="a" style="left:306px;top:695.75px;width:967px;height:38.6px;background:#f4f4f4;border-radius:5px"></div>
<div id="t99" class="a" style="left:317.90px;top:710.93px;font-size:10.30px;color:#444;font-weight:normal;transform:scaleX(0.9947);transform-origin:left center;">POL-147</div>
<div id="t100" class="a" style="left:389.90px;top:710.93px;font-size:10.30px;color:#444;font-weight:normal;transform:scaleX(1.0426);transform-origin:left center;">Information Security Policy — ISO 27001:2022</div>
<div class="a" style="left:804px;top:706.55px;width:81px;height:17px;background:#1bbfc0;border-radius:3px"></div>
<div id="t101" class="a" style="left:830.50px;top:711.18px;font-size:10.00px;color:#2a2a2a;font-weight:normal;transform:scaleX(1.0492);transform-origin:left center;-webkit-text-stroke:0.1px #2a2a2a;">Policy</div>
<div id="t102" class="a" style="left:936.20px;top:710.93px;font-size:10.30px;color:#444;font-weight:normal;transform:scaleX(1.0120);transform-origin:left center;">1.0</div>
<div id="t103" class="a" style="left:1032.80px;top:710.93px;font-size:10.30px;color:#444;font-weight:normal;transform:scaleX(1.0347);transform-origin:left center;">14-04-2027</div>
<div class="a" style="left:1165.2px;top:706.55px;width:81px;height:17px;background:#c2c2c2;border-radius:3px"></div>
<div id="t104" class="a" style="left:1193.00px;top:711.18px;font-size:10.00px;color:#2a2a2a;font-weight:normal;transform:scaleX(1.1536);transform-origin:left center;-webkit-text-stroke:0.1px #2a2a2a;">Draft</div>
<div class="a" style="left:306px;top:738.50px;width:967px;height:38.6px;background:#f4f4f4;border-radius:5px"></div>
<div id="t105" class="a" style="left:317.90px;top:753.68px;font-size:10.30px;color:#444;font-weight:normal;transform:scaleX(0.9947);transform-origin:left center;">POL-146</div>
<div id="t106" class="a" style="left:389.90px;top:753.68px;font-size:10.30px;color:#444;font-weight:normal;transform:scaleX(1.0565);transform-origin:left center;">Personal Data Protection Policy</div>
<div class="a" style="left:804px;top:749.30px;width:81px;height:17px;background:#1bbfc0;border-radius:3px"></div>
<div id="t107" class="a" style="left:830.50px;top:753.93px;font-size:10.00px;color:#2a2a2a;font-weight:normal;transform:scaleX(1.0492);transform-origin:left center;-webkit-text-stroke:0.1px #2a2a2a;">Policy</div>
<div id="t108" class="a" style="left:936.20px;top:753.68px;font-size:10.30px;color:#444;font-weight:normal;transform:scaleX(1.0120);transform-origin:left center;">1.0</div>
<div id="t109" class="a" style="left:1032.80px;top:753.68px;font-size:10.30px;color:#444;font-weight:normal;transform:scaleX(1.0347);transform-origin:left center;">14-04-2027</div>
<div class="a" style="left:1165.2px;top:749.30px;width:81px;height:17px;background:#c2c2c2;border-radius:3px"></div>
<div id="t110" class="a" style="left:1193.00px;top:753.93px;font-size:10.00px;color:#2a2a2a;font-weight:normal;transform:scaleX(1.1536);transform-origin:left center;-webkit-text-stroke:0.1px #2a2a2a;">Draft</div>
<div class="a" style="left:306px;top:781.25px;width:967px;height:38.6px;background:#f4f4f4;border-radius:5px"></div>
<div id="t111" class="a" style="left:317.90px;top:796.43px;font-size:10.30px;color:#444;font-weight:normal;transform:scaleX(0.9947);transform-origin:left center;">POL-145</div>
<div id="t112" class="a" style="left:389.90px;top:796.43px;font-size:10.30px;color:#444;font-weight:normal;transform:scaleX(1.0565);transform-origin:left center;">Personal Data Protection Policy</div>
<div class="a" style="left:804px;top:792.05px;width:81px;height:17px;background:#1bbfc0;border-radius:3px"></div>
<div id="t113" class="a" style="left:830.50px;top:796.68px;font-size:10.00px;color:#2a2a2a;font-weight:normal;transform:scaleX(1.0492);transform-origin:left center;-webkit-text-stroke:0.1px #2a2a2a;">Policy</div>
<div id="t114" class="a" style="left:936.20px;top:796.43px;font-size:10.30px;color:#444;font-weight:normal;transform:scaleX(1.0120);transform-origin:left center;">1.0</div>
<div id="t115" class="a" style="left:1032.80px;top:796.43px;font-size:10.30px;color:#444;font-weight:normal;transform:scaleX(1.0347);transform-origin:left center;">14-04-2027</div>
<div class="a" style="left:1165.2px;top:792.05px;width:81px;height:17px;background:#c2c2c2;border-radius:3px"></div>
<div id="t116" class="a" style="left:1193.00px;top:796.68px;font-size:10.00px;color:#2a2a2a;font-weight:normal;transform:scaleX(1.1536);transform-origin:left center;-webkit-text-stroke:0.1px #2a2a2a;">Draft</div>
<div class="a" style="left:1304px;top:283.3px;width:274.5px;height:424.5px;background:#fff;border-radius:9px;box-shadow:0 2px 10px rgba(0,0,0,0.08)"></div>
<div id="t117" class="a" style="left:1321.40px;top:305.18px;font-size:11.60px;color:#333;font-weight:normal;transform:scaleX(1.0453);transform-origin:left center;-webkit-text-stroke:0.2px #333;">Detail</div>
<svg class="a" style="left:1489px;top:303px" width="15" height="15" viewBox="0 0 15 15"><path d="M2.5 12.5 L3 9.8 L10 2.8 L12.2 5 L5.2 12 Z" stroke="#222" stroke-width="1.4" fill="none" stroke-linejoin="round"/><path d="M9.2 3.6 L11.4 5.8" stroke="#222" stroke-width="1.4"/></svg>
<div class="a" style="left:1514.2px;top:300.8px;width:20.3px;height:20.3px;border-radius:50%;background:#f1f1f1"></div>
<svg class="a" style="left:1516px;top:303px" width="17" height="17" viewBox="0 0 17 17"><circle cx="3.9" cy="7.5" r="1.3" fill="#222"/><circle cx="8.3" cy="7.5" r="1.3" fill="#222"/><circle cx="12.7" cy="7.5" r="1.3" fill="#222"/></svg>
<svg class="a" style="left:1544px;top:303px" width="15" height="15" viewBox="0 0 15 15"><path d="M2.8 2.8 L12 12 M12 2.8 L2.8 12" stroke="#222" stroke-width="1.5"/></svg>
<div id="t118" class="a" style="left:1326.30px;top:337.26px;font-size:13.40px;color:#222;font-weight:normal;transform-origin:left center;">Information Security Policy</div>
<div id="t119" class="a" style="left:1322.50px;top:372.59px;font-size:11.00px;color:#2e8b57;font-weight:normal;transform-origin:left center;">View description</div>
<svg class="a" style="left:1545px;top:372px" width="15" height="12" viewBox="0 0 15 12"><path d="M2.8 3 L7.5 7.7 L12.2 3" stroke="#222" stroke-width="1.6" fill="none"/></svg>
<div class="a" style="left:1322px;top:402px;width:240px;height:1px;background:#e8e8e8"></div>
<div class="a" style="left:1385px;top:326px;width:150px;height:72px;background:#fff;border-radius:7px;box-shadow:0 3px 12px rgba(0,0,0,0.14)"></div>
<svg class="a" style="left:1397px;top:335px" width="17" height="17" viewBox="0 0 17 17"><g stroke="#222" stroke-width="1.5" fill="none"><path d="M4.6 4.8 V14.5 H12.2 V4.8"/><path d="M3 3.6 H13.8 M6.4 3.6 V2.2 H10.4 V3.6"/></g></svg>
<div id="t120" class="a" style="left:1421.70px;top:339.07px;font-size:9.60px;color:#555;font-weight:normal;transform:scaleX(0.9555);transform-origin:left center;">Delete</div>
<svg class="a" style="left:1397px;top:371px" width="17" height="17" viewBox="0 0 17 17"><g stroke="#222" stroke-width="1.6" fill="none"><path d="M8.4 12 V4 M5 7.2 L8.4 3.8 L11.8 7.2"/><path d="M3.2 11.6 V14.3 H13.6 V11.6"/></g></svg>
<div id="t121" class="a" style="left:1421.70px;top:374.97px;font-size:9.60px;color:#555;font-weight:normal;transform:scaleX(0.9714);transform-origin:left center;">Deprecate</div>
<svg class="a" style="left:1322px;top:419px" width="14" height="13" viewBox="0 0 14 13"><g stroke="#333" stroke-width="1.2" fill="none"><path d="M1.5 1.5 H11.8 V9.8 H11.8 L12.5 11.5 L10.5 9.8 H1.5 Z"/><path d="M3.5 4 H9.8 M3.5 5.8 H9.8 M3.5 7.6 H8" stroke-width="1"/></g></svg>
<div id="t122" class="a" style="left:1342.20px;top:419.73px;font-size:10.60px;color:#333;font-weight:normal;transform:scaleX(1.0224);transform-origin:left center;-webkit-text-stroke:0.2px #333;">Communicate document</div>
<div id="t123" class="a" style="left:1322.30px;top:443.61px;font-size:10.50px;color:#888;font-weight:normal;transform:scaleX(1.0464);transform-origin:left center;">Valuable information should be shared. If you</div>
<div id="t124" class="a" style="left:1322.30px;top:458.51px;font-size:10.50px;color:#888;font-weight:normal;transform:scaleX(1.0364);transform-origin:left center;">changed or updated this document, share the</div>
<div id="t125" class="a" style="left:1322.30px;top:473.61px;font-size:10.50px;color:#888;font-weight:normal;transform:scaleX(1.0420);transform-origin:left center;">new version with stakeholders.</div>
<div class="a" style="left:1322.4px;top:496.4px;width:112px;height:26.3px;border:1px solid #8a8a8a;border-radius:14px"></div>
<div id="t126" class="a" style="left:1343.40px;top:504.69px;font-size:11.00px;color:#555;font-weight:normal;transform:scaleX(1.0360);transform-origin:left center;">Communicate</div>
<div class="a" style="left:1322px;top:538px;width:240px;height:1px;background:#e8e8e8"></div>
<div id="t127" class="a" style="left:1322.30px;top:556.58px;font-size:10.30px;color:#888;font-weight:normal;transform:scaleX(0.9939);transform-origin:left center;">Owner:</div>
<div id="t128" class="a" style="right:39.00px;top:556.58px;font-size:10.30px;color:#333;font-weight:normal;transform:scaleX(1.0338);transform-origin:right center;-webkit-text-stroke:0.2px #333;">Harold Alejandro Rojas Peña</div>
<div id="t129" class="a" style="left:1322.30px;top:586.98px;font-size:10.30px;color:#888;font-weight:normal;transform:scaleX(1.0704);transform-origin:left center;">Publication date:</div>
<div id="t130" class="a" style="right:39.00px;top:586.98px;font-size:10.30px;color:#333;font-weight:normal;transform:scaleX(1.0864);transform-origin:right center;-webkit-text-stroke:0.2px #333;">15/04/2026</div>
<div id="t131" class="a" style="left:1322.30px;top:617.18px;font-size:10.30px;color:#888;font-weight:normal;transform:scaleX(1.0135);transform-origin:left center;">Due Date:</div>
<div id="t132" class="a" style="right:39.00px;top:617.18px;font-size:10.30px;color:#333;font-weight:normal;transform:scaleX(1.0864);transform-origin:right center;-webkit-text-stroke:0.2px #333;">16/04/2027</div>
<div id="t133" class="a" style="left:1322.30px;top:647.58px;font-size:10.30px;color:#888;font-weight:normal;transform:scaleX(1.0559);transform-origin:left center;">Version:</div>
<div id="t134" class="a" style="right:39.00px;top:647.58px;font-size:10.30px;color:#333;font-weight:normal;transform:scaleX(0.9771);transform-origin:right center;-webkit-text-stroke:0.2px #333;">1.1</div>
<div id="t135" class="a" style="left:1322.30px;top:677.28px;font-size:10.30px;color:#888;font-weight:normal;transform:scaleX(1.0737);transform-origin:left center;">Validity:</div>
<div id="t136" class="a" style="right:39.00px;top:677.28px;font-size:10.30px;color:#333;font-weight:normal;transform:scaleX(1.0020);transform-origin:right center;-webkit-text-stroke:0.2px #333;">On track</div>
<div class="a" style="left:1597px;top:130px;width:3px;height:689px;background:#fafafa"></div>
<div class="a" style="left:1597.3px;top:130px;width:2.7px;height:375px;background:#e0e0e0;border-radius:2px 0 0 2px"></div>
</body></html>
